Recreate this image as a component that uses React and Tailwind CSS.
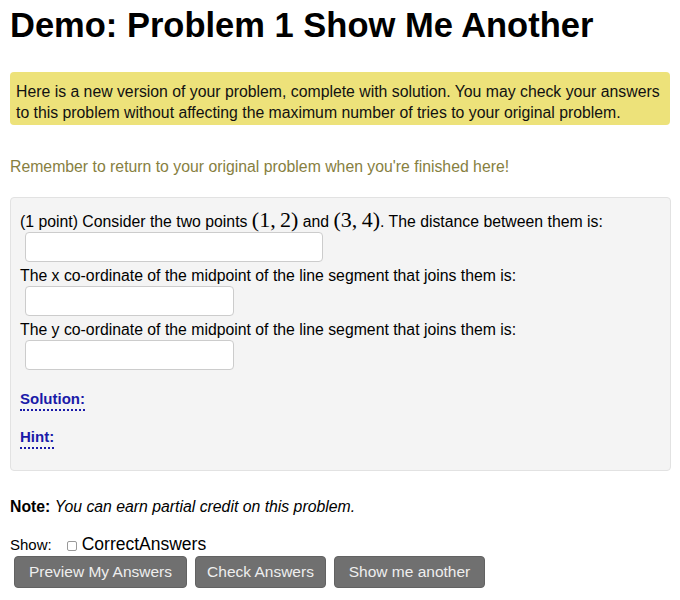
export default function App() {
  const font = { fontFamily: '"Liberation Sans", Arial, sans-serif' };
  return (
    <div className="bg-white min-h-[600px] px-[10px] text-[15.8px] text-black" style={font}>
      <h1 className="pt-[5px] text-[34.5px] leading-[40px] font-bold">Demo: Problem 1 Show Me Another</h1>

      <div className="mt-[27px] w-[660px] bg-[#ede27a] rounded-[4px] pl-[6px] pr-[4px] pt-[9px] pb-[2px] leading-[21px] text-[#111]">
        Here is a new version of your problem, complete with solution. You may check your answers to this problem without affecting the maximum number of tries to your original problem.
      </div>

      <div className="mt-[31px] leading-[21px] text-[#87803f]">
        Remember to return to your original problem when you're finished here!
      </div>

      <div className="mt-[20px] w-[661px] h-[274px] bg-[#f4f4f4] border border-[#e2e2e2] rounded-[4px] pl-[9px] pt-[11px]">
        <div className="leading-[25px] h-[23px] whitespace-nowrap">
          (1 point) Consider the two points{' '}
          <span className="text-[22px] leading-none font-['Liberation_Serif',serif]">(1,{'\u2009'}2)</span>
          {' '}and{' '}
          <span className="text-[22px] leading-none font-['Liberation_Serif',serif]">(3,{'\u2009'}4)</span>. The distance between them is:
        </div>
        <input className="block ml-[5px] w-[298px] h-[30px] bg-white border border-[#cccccc] rounded-[4px]" />
        <div className="mt-[1px] h-[21px] leading-[25px]">The x co-ordinate of the midpoint of the line segment that joins them is:</div>
        <input className="block mt-[2px] ml-[5px] w-[209px] h-[30px] bg-white border border-[#cccccc] rounded-[4px]" />
        <div className="mt-[1px] h-[21px] leading-[25px]">The y co-ordinate of the midpoint of the line segment that joins them is:</div>
        <input className="block mt-[2px] ml-[5px] w-[209px] h-[30px] bg-white border border-[#cccccc] rounded-[4px]" />
        <div className="mt-[17px]">
          <span className="inline-block text-[15px] leading-[20px] font-bold text-[#1a1aa8] border-b-2 border-dotted border-[#1a1aa8]">Solution:</span>
        </div>
        <div className="mt-[14px]">
          <span className="inline-block text-[15px] leading-[20px] font-bold text-[#1a1aa8] border-b-2 border-dotted border-[#1a1aa8]">Hint:</span>
        </div>
      </div>

      <div className="mt-[25px] leading-[21px]">
        <span className="font-bold">Note:</span> <i>You can earn partial credit on this problem.</i>
      </div>

      <div className="mt-[17px] leading-[21px] h-[21px] flex items-baseline">
        <span className="text-[15px]">Show:</span>
        <span className="ml-[15px] inline-block w-[10px] h-[10px] border border-[#999] rounded-[2px] bg-white self-center translate-y-[1px]"></span>
        <span className="ml-[5px] text-[17.5px] leading-none">CorrectAnswers</span>
      </div>

      <div className="mt-[1px] flex gap-[8px] ml-[4px]">
        <button className="h-[32px] w-[173px] bg-[#707070] border border-[#626262] rounded-[4px] text-[15.5px] text-[#eeeeee]">Preview My Answers</button>
        <button className="h-[32px] w-[131px] bg-[#707070] border border-[#626262] rounded-[4px] text-[15.5px] text-[#eeeeee]">Check Answers</button>
        <button className="h-[32px] w-[151px] bg-[#707070] border border-[#626262] rounded-[4px] text-[15.5px] text-[#eeeeee]">Show me another</button>
      </div>
    </div>
  );
}
